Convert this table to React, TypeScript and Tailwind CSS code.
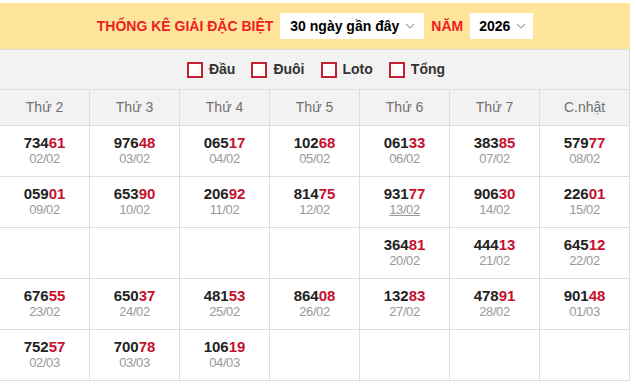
import React from 'react';

type Cell = { num: string; date: string; link?: boolean } | null;

const days = ['Thứ 2', 'Thứ 3', 'Thứ 4', 'Thứ 5', 'Thứ 6', 'Thứ 7', 'C.nhật'];

const rows: Cell[][] = [
  [
    { num: '73461', date: '02/02' },
    { num: '97648', date: '03/02' },
    { num: '06517', date: '04/02' },
    { num: '10268', date: '05/02' },
    { num: '06133', date: '06/02' },
    { num: '38385', date: '07/02' },
    { num: '57977', date: '08/02' },
  ],
  [
    { num: '05901', date: '09/02' },
    { num: '65390', date: '10/02' },
    { num: '20692', date: '11/02' },
    { num: '81475', date: '12/02' },
    { num: '93177', date: '13/02', link: true },
    { num: '90630', date: '14/02' },
    { num: '22601', date: '15/02' },
  ],
  [
    null,
    null,
    null,
    null,
    { num: '36481', date: '20/02' },
    { num: '44413', date: '21/02' },
    { num: '64512', date: '22/02' },
  ],
  [
    { num: '67655', date: '23/02' },
    { num: '65037', date: '24/02' },
    { num: '48153', date: '25/02' },
    { num: '86408', date: '26/02' },
    { num: '13283', date: '27/02' },
    { num: '47891', date: '28/02' },
    { num: '90148', date: '01/03' },
  ],
  [
    { num: '75257', date: '02/03' },
    { num: '70078', date: '03/03' },
    { num: '10619', date: '04/03' },
    null,
    null,
    null,
    null,
  ],
];

function Chevron() {
  return (
    <svg width="10" height="6" viewBox="0 0 10 6" fill="none" className="ml-[6px] shrink-0">
      <path d="M1 1l4 4 4-4" stroke="#aaa" strokeWidth="1.2" />
    </svg>
  );
}

function Check({ label }: { label: string }) {
  return (
    <label className="flex items-center gap-[6px]">
      <span className="w-4 h-4 border-2 border-[#c41f33] bg-white" />
      <span className="font-bold text-[14px] text-[#333]">{label}</span>
    </label>
  );
}

export default function App() {
  return (
    <div className="pt-[3px] bg-white font-['Liberation_Sans',Arial,sans-serif]">
      <div className="w-[630px]">
        <div className="h-[46px] bg-[#fee59b] flex items-center justify-center gap-[6px]">
          <span className="text-[14px] font-bold text-[#ef1c24] mr-[1px] whitespace-nowrap">THỐNG KÊ GIẢI ĐẶC BIỆT</span>
          <div className="h-[26px] w-[144px] bg-white flex items-center pl-[10px] text-[14px] font-bold text-black whitespace-nowrap">
            30 ngày gần đây
            <Chevron />
          </div>
          <span className="text-[14px] font-bold text-[#ef1c24] mx-[1px]">NĂM</span>
          <div className="h-[26px] w-[63px] bg-white flex items-center pl-[9px] text-[14px] font-bold text-black">
            2026
            <Chevron />
          </div>
        </div>
        <div className="h-[40px] bg-[#f2f2f2] border-t border-r border-[#dddddd] flex items-center justify-center gap-[16px] pl-[3px]">
          <Check label="Đầu" />
          <Check label="Đuôi" />
          <Check label="Loto" />
          <Check label="Tổng" />
        </div>
        <div className="grid grid-cols-7 border-t border-[#dddddd]">
          {days.map((d) => (
            <div
              key={d}
              className="h-[36px] bg-[#f2f2f2] border-r border-b border-[#dddddd] flex items-center justify-center text-[14px] text-[#707070]"
            >
              {d}
            </div>
          ))}
          {rows.flat().map((c, i) => (
            <div
              key={i}
              className="h-[51px] border-r border-b border-[#dddddd] flex flex-col items-center justify-center pb-[2px]"
            >
              {c && (
                <>
                  <div className="text-[15px] font-bold leading-[17px] text-[#222]">
                    {c.num.slice(0, 3)}
                    <span className="text-[#c8102e]">{c.num.slice(3)}</span>
                  </div>
                  <div
                    className={`text-[13px] leading-[15px] tracking-[-0.4px] text-[#999] ${c.link ? 'underline' : ''}`}
                  >
                    {c.date}
                  </div>
                </>
              )}
            </div>
          ))}
        </div>
      </div>
    </div>
  );
}
